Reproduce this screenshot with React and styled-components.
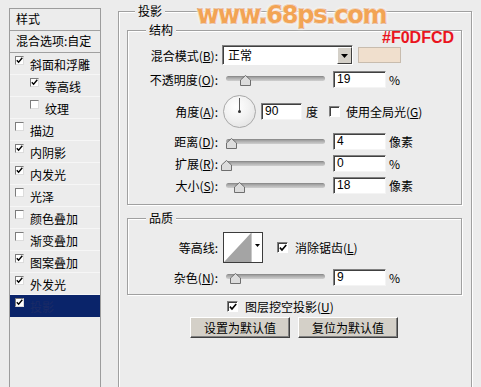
import React from 'react';
import styled, { createGlobalStyle } from 'styled-components';

const Global = createGlobalStyle`
  html, body { margin: 0; padding: 0; background: #ececec; }
  body { font-family: "Noto Sans CJK SC", "Liberation Sans", sans-serif; font-size: 12px; color: #000; }
  * { box-sizing: border-box; }
`;

const Page = styled.div`
  position: relative;
  width: 481px;
  height: 387px;
  overflow: hidden;
  display: flex;
  align-items: flex-start;
  background: #ececec;
`;

/* ---------- Sidebar ---------- */
const Sidebar = styled.div`
  margin: 8px 0 0 9px;
  width: 92px;
  height: 400px;
  flex: none;
  border: 1px solid #9c9c9c;
  border-bottom: none;
  background: #ececec;
`;

const SideHead = styled.div`
  height: 22px;
  padding: 1px 0 0 6px;
  line-height: 18px;
  border-bottom: 1px solid #a0a0a0;
  white-space: nowrap;
`;

const SideItem = styled.div`
  height: 22px;
  display: flex;
  align-items: center;
  gap: 6px;
  padding-left: ${p => (p.$indent ? 20 : 5)}px;
  white-space: nowrap;
  background: ${p => (p.$active ? '#0a246a' : 'transparent')};
  color: ${p => (p.$active ? '#1b2b66' : '#000')};
  box-shadow: ${p => (p.$active ? 'none' : 'inset 0 -1px 0 #f6f6f6')};
`;

const SBox = styled.span`
  width: 9px;
  height: 9px;
  flex: none;
  align-self: flex-start;
  margin-top: 3px;
  background: #fff;
  border: 1px solid;
  border-color: #7c7c7c #dcdcdc #dcdcdc #7c7c7c;
  display: flex;
  align-items: center;
  justify-content: center;
`;

const Check = ({ size = 7 }) => (
  <svg width={size} height={size} viewBox="0 0 7 7">
    <path d="M0.8 3.2 L2.6 5.2 L6.3 0.8" fill="none" stroke="#000" strokeWidth="1.4" />
  </svg>
);

const sideItems = [
  { label: '斜面和浮雕', checked: true },
  { label: '等高线', checked: true, indent: true },
  { label: '纹理', indent: true },
  { label: '描边' },
  { label: '内阴影', checked: true },
  { label: '内发光', checked: true },
  { label: '光泽' },
  { label: '颜色叠加' },
  { label: '渐变叠加' },
  { label: '图案叠加', checked: true },
  { label: '外发光', checked: true },
  { label: '投影', checked: true, active: true },
];

/* ---------- Main groups ---------- */
const Outer = styled.fieldset`
  margin: 4px 0 0 17px;
  padding: 0 9px 0 8px;
  width: 354px;
  height: 400px;
  min-width: 0;
  flex: none;
  border: 1px solid #a0a0a0;
  box-shadow: inset 1px 1px 0 #fff, 1px 1px 0 #fff;
`;

const Group = styled.fieldset`
  margin: ${p => p.$mt}px 0 0 0;
  padding: 0 0 ${p => p.$pb}px 0;
  min-width: 0;
  border: 1px solid #a0a0a0;
  box-shadow: inset 1px 1px 0 #fff, 1px 1px 0 #fff;
`;

const Legend = styled.legend`
  margin-left: ${p => p.$ml}px;
  padding: 0 3px;
  height: 14px;
  line-height: 14px;
  font-size: 12px;
  background: #ececec;
`;

const Row = styled.div`
  display: flex;
  align-items: center;
  height: ${p => p.$h}px;
  margin-top: ${p => p.$mt}px;
  white-space: nowrap;
`;

const Label = styled.span`
  width: 90px;
  flex: none;
  margin-right: 4px;
  text-align: right;
`;

const Select = styled.div`
  display: flex;
  width: 131px;
  height: 20px;
  background: #fff;
  border: 1px solid;
  border-color: #808080 #fff #fff #808080;
  box-shadow: inset 1px 1px 0 #404040;
`;

const SelectText = styled.span`
  flex: 1;
  padding: 1px 0 0 5px;
  line-height: 16px;
`;

const SelectBtn = styled.span`
  width: 15px;
  margin: 1px 0 0 0;
  background: #d4d0c8;
  border: 1px solid;
  border-color: #fff #404040 #404040 #fff;
  display: flex;
  align-items: center;
  justify-content: center;
`;

const Swatch = styled.span`
  width: 43px;
  height: 16px;
  margin-left: 5px;
  background: #f0dfcd;
  border: 1px solid #c8bcae;
`;

const SliderWrap = styled.div`
  position: relative;
  width: 111px;
  height: 100%;
  flex: none;
  display: flex;
  align-items: center;
  padding-left: 4px;
  margin-top: ${p => p.$dy || 0}px;
`;

const Track = styled.div`
  position: relative;
  width: 99px;
  height: 5px;
  border-radius: 3px;
  background: linear-gradient(#7e7e7e 0, #9c9c9c 1px, #b8b8b8 3px, #cfcfcf 5px);
`;

const Thumb = styled.svg`
  position: absolute;
  top: -1px;
`;

const Input = styled.div`
  width: ${p => p.$w || 53}px;
  height: 17px;
  flex: none;
  background: #fff;
  border: 1px solid;
  border-color: #808080 #f4f4f4 #f4f4f4 #808080;
  box-shadow: inset 1px 1px 0 #404040;
  padding: 0 0 0 3px;
  line-height: 15px;
  font-family: "Liberation Sans", "Noto Sans CJK SC", sans-serif;
  font-size: 12px;
`;

const Unit = styled.span`
  margin-left: ${p => p.$ml || 3}px;
`;

const Dial = styled.div`
  position: relative;
  width: 33px;
  height: 33px;
  margin-left: 1px;
  flex: none;
  border-radius: 50%;
  border: 1px solid #a8a8a8;
  background: radial-gradient(circle at 40% 35%, #ffffff 0%, #f2f2f2 45%, #dcdcdc 100%);
`;

const DialHand = styled.span`
  position: absolute;
  left: 15px;
  top: 2px;
  width: 1px;
  height: 14px;
  background: #5a5a5a;
`;

const DialDot = styled.span`
  position: absolute;
  left: 14px;
  top: 14px;
  width: 3px;
  height: 3px;
  border-radius: 50%;
  background: #333;
`;

const CBox = styled.span`
  width: 11px;
  height: 11px;
  flex: none;
  margin-left: ${p => p.$ml || 0}px;
  margin-right: ${p => p.$mr || 6}px;
  background: #fff;
  border: 1px solid;
  border-color: #808080 #fff #fff #808080;
  box-shadow: inset 1px 1px 0 #404040;
  display: flex;
  align-items: center;
  justify-content: center;
  padding: 1px 0 0 1px;
`;

const Contour = styled.div`
  display: flex;
  width: 40px;
  height: 31px;
  margin-left: 1px;
  flex: none;
  border: 1px solid #3c3c3c;
  background: #fff;
`;

const ContourArrow = styled.span`
  width: 11px;
  border-left: 1px solid #c8c8c8;
  display: flex;
  align-items: center;
  justify-content: center;
  padding-bottom: 4px;
`;

const KnockRow = styled.div`
  display: flex;
  align-items: center;
  height: 13px;
  margin-top: 5px;
  padding-left: 100px;
  white-space: nowrap;
`;

const ButtonRow = styled.div`
  display: flex;
  gap: 8px;
  margin-top: 4px;
  padding-left: 63px;
`;

const Button = styled.div`
  width: 100px;
  height: 21px;
  display: flex;
  align-items: center;
  justify-content: center;
  background: #d4d0c8;
  border: 1px solid;
  border-color: #fff #404040 #404040 #fff;
  box-shadow: inset -1px -1px 0 #808080;
  font-size: 12px;
`;

const Watermark = styled.div`
  position: absolute;
  left: 197px;
  top: 1px;
  font-family: "DejaVu Sans", "Liberation Sans", sans-serif;
  font-weight: bold;
  font-size: 24px;
  letter-spacing: -1.2px;
  color: #f2a455;
  -webkit-text-stroke: 1.4px #c9621e;
  paint-order: stroke fill;
  text-shadow: 0 0 2px #fff, 0 0 3px #fff, 0 0 4px #fff8ee;
`;

const ColorNote = styled.div`
  position: absolute;
  left: 382px;
  top: 29px;
  font-family: "Liberation Sans", sans-serif;
  font-weight: bold;
  font-size: 16px;
  color: #ea1420;
`;

const Slider = ({ pos, dy }) => (
  <SliderWrap $dy={dy}>
    <Track>
      <Thumb width="11" height="11" viewBox="0 0 11 11" style={{ left: pos - 5.5 }}>
        <path d="M0.5 10.5 L0.5 5 L5.5 0.5 L10.5 5 L10.5 10.5 Z" fill="#dcdcdc" stroke="#6e6e6e" />
      </Thumb>
    </Track>
  </SliderWrap>
);

const U = styled.span`text-decoration: underline;`;

export default function App() {
  return (
    <>
      <Global />
      <Page>
        <Sidebar>
          <SideHead>样式</SideHead>
          <SideHead>混合选项:自定</SideHead>
          {sideItems.map(it => (
            <SideItem key={it.label} $indent={it.indent} $active={it.active}>
              <SBox>{it.checked && <Check />}</SBox>
              <span>{it.label}</span>
            </SideItem>
          ))}
        </Sidebar>

        <Outer>
          <Legend $ml={8}>投影</Legend>
          <Group $mt={5} $pb={10}>
            <Legend $ml={18}>结构</Legend>
            <Row $h={20} $mt={8}>
              <Label>混合模式(<U>B</U>):</Label>
              <Select>
                <SelectText>正常</SelectText>
                <SelectBtn>
                  <svg width="7" height="4" viewBox="0 0 7 4"><path d="M0 0 H7 L3.5 4 Z" fill="#000" /></svg>
                </SelectBtn>
              </Select>
              <Swatch />
            </Row>
            <Row $h={18} $mt={5}>
              <Label>不透明度(<U>O</U>):</Label>
              <Slider pos={19} dy={-2} />
              <Input>19</Input>
              <Unit>%</Unit>
            </Row>
            <Row $h={33} $mt={7}>
              <Label>角度(<U>A</U>):</Label>
              <Dial><DialHand /><DialDot /></Dial>
              <Input $w={41} style={{ marginLeft: 5 }}>90</Input>
              <Unit $ml={4}>度</Unit>
              <CBox $ml={11} />
              <span>使用全局光(<U>G</U>)</span>
            </Row>
            <Row $h={18} $mt={4}>
              <Label>距离(<U>D</U>):</Label>
              <Slider pos={5} />
              <Input>4</Input>
              <Unit>像素</Unit>
            </Row>
            <Row $h={18} $mt={4}>
              <Label>扩展(<U>R</U>):</Label>
              <Slider pos={0} />
              <Input>0</Input>
              <Unit>%</Unit>
            </Row>
            <Row $h={18} $mt={4}>
              <Label>大小(<U>S</U>):</Label>
              <Slider pos={13} />
              <Input>18</Input>
              <Unit>像素</Unit>
            </Row>
          </Group>

          <Group $mt={6} $pb={8}>
            <Legend $ml={18}>品质</Legend>
            <Row $h={31} $mt={7}>
              <Label>等高线:</Label>
              <Contour>
                <svg width="27" height="29" viewBox="0 0 27 29">
                  <path d="M0 29 L27 0 L27 29 Z" fill="#a4a4a4" />
                </svg>
                <ContourArrow>
                  <svg width="5" height="3" viewBox="0 0 5 3"><path d="M0 0 H5 L2.5 3 Z" fill="#000" /></svg>
                </ContourArrow>
              </Contour>
              <CBox $ml={14} $mr={7}><Check size={8} /></CBox>
              <span>消除锯齿(<U>L</U>)</span>
            </Row>
            <Row $h={18} $mt={5}>
              <Label>杂色(<U>N</U>):</Label>
              <Slider pos={9} dy={-2} />
              <Input>9</Input>
              <Unit>%</Unit>
            </Row>
          </Group>

          <KnockRow>
            <CBox $mr={7}><Check size={8} /></CBox>
            <span>图层挖空投影(<U>U</U>)</span>
          </KnockRow>
          <ButtonRow>
            <Button>设置为默认值</Button>
            <Button>复位为默认值</Button>
          </ButtonRow>
        </Outer>

        <Watermark>www.68ps.com</Watermark>
        <ColorNote>#F0DFCD</ColorNote>
      </Page>
    </>
  );
}
